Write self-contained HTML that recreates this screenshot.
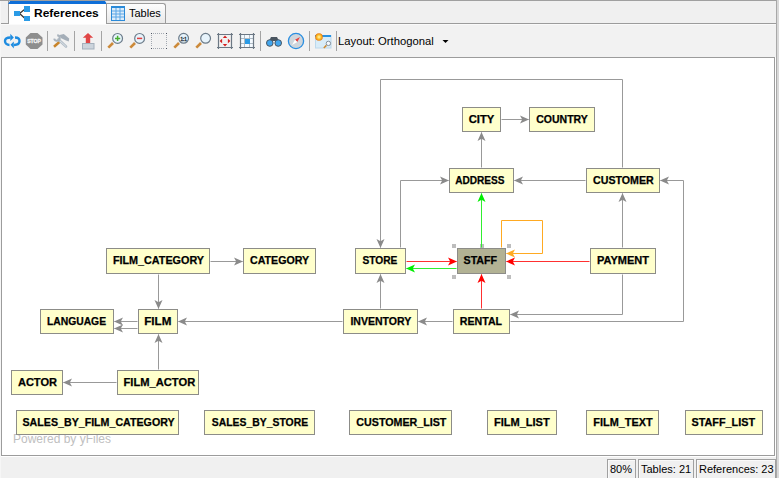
<!DOCTYPE html>
<html><head><meta charset="utf-8">
<style>
*{margin:0;padding:0;box-sizing:border-box}
html,body{width:779px;height:478px;overflow:hidden;background:#f0f0f0;font-family:"Liberation Sans",sans-serif;position:relative}
.abs{position:absolute}
#topline{left:0;top:0;width:777px;height:1px;background:#a0a0a0}
#rightline{left:776px;top:0;width:1px;height:478px;background:#a8a8a8}
#rightstrip{left:777px;top:0;width:2px;height:478px;background:#d9d9d9}
#tabline{left:1px;top:23px;width:775px;height:1px;background:#9c9c9c}
#tabhl{left:1px;top:24px;width:775px;height:1px;background:#fafafa}
#toolbar{left:1px;top:25px;width:775px;height:32px;background:#f2f2f2}
#tab1{left:8px;top:1px;width:98px;height:23px;background:#fff;border-left:1px solid #9c9c9c}
#tab1 .blue{position:absolute;left:-1px;top:0;width:99px;height:3px;background:#0f6fd8;clip-path:polygon(2px 0,calc(100% - 2px) 0,100% 100%,0 100%)}
#tab1 .t{position:absolute;left:25px;top:5px;font-size:11.5px;font-weight:bold;color:#000;line-height:14px;white-space:nowrap;transform:scaleX(1.045);transform-origin:0 0}
#tab2{left:106px;top:3px;width:60px;height:20px;border:1px solid #9c9c9c;border-bottom:none;border-top-right-radius:3px;background:linear-gradient(#fdfdfd,#e9e9e9)}
#tab2 .t{position:absolute;left:22px;top:2px;font-size:11px;color:#000;line-height:14px;white-space:nowrap}
.sep{position:absolute;top:31px;width:1px;height:20px;background:#a4a4a4}
#layout{left:338px;top:34px;font-size:11.25px;color:#000;line-height:14px;white-space:nowrap}
#canvas{left:1px;top:57px;width:774px;height:399px;background:#fff;border:1px solid #9c9c9c}
#canvhl{left:1px;top:57px;width:775px;height:400px;background:#fff}
.n{position:absolute;border:1px solid #8c8c88;display:flex;align-items:flex-start;justify-content:center;padding-top:5px;font-weight:bold;font-size:11px;color:#000;white-space:nowrap}
.n span{display:inline-block;position:relative;top:0px;line-height:13px;-webkit-text-stroke:0.25px #000}
#powered{left:13px;top:432px;font-size:12px;color:#c0c0c0;line-height:14px;white-space:nowrap}
.sb{position:absolute;top:459px;height:19px;border:1px solid #a0a0a0;border-bottom:none;background:#f0f0f0;font-size:11px;line-height:14px;white-space:nowrap;padding-left:2px;padding-top:1.5px}
.sb:before{content:"";position:absolute;left:0;top:0;right:0;bottom:0;border-left:1px solid #fafafa;border-top:1px solid #fafafa}
</style></head><body>
<div class="abs" id="topline"></div>
<div class="abs" id="rightstrip"></div>
<div class="abs" style="left:0;top:1px;width:1px;height:477px;background:#f6f6f6"></div>
<div class="abs" id="tabline"></div>
<div class="abs" id="tabhl"></div>
<div class="abs" id="toolbar"></div>
<div class="abs" id="tab1"><div class="blue"></div>
<svg class="abs" style="left:5px;top:5px" width="17" height="17" viewBox="0 0 17 17">
<path d="M5.5 7.5 L10.5 3.5 M5.5 7.5 L10.5 12" stroke="#333" stroke-width="1.3" fill="none"/>
<rect x="0" y="5" width="6" height="5" fill="#2a9be6"/>
<rect x="10" y="0" width="6" height="6" fill="#2a9be6"/>
<rect x="10" y="10" width="6" height="5" fill="#2a9be6"/>
</svg>
<div class="t">References</div></div>
<div class="abs" id="tab2">
<svg class="abs" style="left:4px;top:2px" width="14" height="15" viewBox="0 0 14 15">
<rect x="0" y="0" width="14" height="15" fill="#2b8ad8"/>
<rect x="1" y="2" width="12" height="12" fill="#dcecfa"/>
<path d="M5 2V14 M9 2V14 M1 5H13 M1 8H13 M1 11H13" stroke="#5aa6e6" stroke-width="1"/>
</svg>
<div class="t">Tables</div></div>

<!-- toolbar icons -->
<svg class="abs" style="left:0;top:25px" width="460" height="32" viewBox="0 25 460 32">
<!-- refresh -->
<g fill="none" stroke="#1e8ce0" stroke-width="2.4">
<path d="M10.5 37.5 C6.5 37.5 5 39 5 41 C5 43.5 7 45 9.5 45"/>
<path d="M14 45 C18 45 19.5 43 19.5 41 C19.5 38.5 17.5 37.5 15 37.5"/>
</g>
<path d="M10.3 33.8 L13.8 37.5 L10.3 41 Z" fill="#1e8ce0"/>
<path d="M13.8 41.5 L10.5 44.8 L13.8 48.5 Z" fill="#1e8ce0"/>
<!-- stop -->
<polygon points="30.5,33 37.5,33 42.5,37.5 42.5,44.5 37.5,49 30.5,49 25.8,44.5 25.8,37.5" fill="#8e8e8e"/>
<text x="27.2" y="43.4" font-family="Liberation Sans" font-weight="bold" font-size="6" fill="#f4f4f4" stroke="#f4f4f4" stroke-width="0.35" textLength="13.8" lengthAdjust="spacingAndGlyphs">STOP</text>
<!-- tools -->
<path d="M54 46.8 L59.4 42" stroke="#c8842a" stroke-width="2.5"/>
<path d="M58.5 39.5 L66 46.5" stroke="#b4bec8" stroke-width="2.6" stroke-linecap="round"/>
<path d="M58.8 39.8 L65.8 46.3" stroke="#dfe5ea" stroke-width="0.9" stroke-linecap="round"/>
<path d="M57.2 35.2 A2.8 2.8 0 1 1 54.2 38.6" stroke="#a8b2bc" stroke-width="2" fill="none"/>
<path d="M59.5 35 L63.8 34 L69.2 38.6 L68.8 41.6 L66 40.6 L60.8 38 Z" fill="#a4aeb8"/>
<!-- export -->
<rect x="82.5" y="43.5" width="11.5" height="5.5" fill="#ccd4dc" stroke="#a4b0bc" stroke-width="1"/>
<polygon points="88,33 93.2,37.8 90.2,37.8 90.2,43 85.8,43 85.8,37.8 82.8,37.8" fill="#e04646"/>
<!-- zoom in -->
<path d="M108.3 47.7 L113 43" stroke="#cc8a3a" stroke-width="2.6"/>
<circle cx="117.6" cy="38.4" r="4.9" fill="#e8f4fc" stroke="#6c7c8a" stroke-width="1.2"/>
<path d="M117.6 35.8 V41 M115 38.4 H120.2" stroke="#48b030" stroke-width="1.5"/>
<!-- zoom out -->
<path d="M130.3 47.7 L135 43" stroke="#cc8a3a" stroke-width="2.6"/>
<circle cx="139.6" cy="38.4" r="4.9" fill="#e8f4fc" stroke="#6c7c8a" stroke-width="1.2"/>
<path d="M137 38.4 H142.2" stroke="#e04040" stroke-width="1.5"/>
<!-- dotted rect -->
<g fill="#4a5260">
<rect x="151" y="33" width="1" height="1"/><rect x="166" y="33" width="1" height="1"/><rect x="151" y="48" width="1" height="1"/><rect x="166" y="48" width="1" height="1"/>
</g>
<g fill="#a4aab2">
<path d="M153 33h1v1h-1z M155 33h1v1h-1z M157 33h1v1h-1z M159 33h1v1h-1z M161 33h1v1h-1z M163 33h1v1h-1z M153 48h1v1h-1z M155 48h1v1h-1z M157 48h1v1h-1z M159 48h1v1h-1z M161 48h1v1h-1z M163 48h1v1h-1z M151 35h1v1h-1z M151 37h1v1h-1z M151 39h1v1h-1z M151 41h1v1h-1z M151 43h1v1h-1z M151 45h1v1h-1z M166 35h1v1h-1z M166 37h1v1h-1z M166 39h1v1h-1z M166 41h1v1h-1z M166 43h1v1h-1z M166 45h1v1h-1z"/>
</g>
<!-- zoom 1:1 -->
<path d="M174.3 47.7 L179 43" stroke="#cc8a3a" stroke-width="2.6"/>
<circle cx="183.6" cy="38.3" r="4.9" fill="#e8f4fc" stroke="#6c7c8a" stroke-width="1.2"/>
<text x="180.4" y="40.8" font-family="Liberation Sans" font-size="6.2" font-weight="bold" fill="#2a3440" stroke="#2a3440" stroke-width="0.3" textLength="6.4" lengthAdjust="spacingAndGlyphs">1:1</text>
<!-- zoom fit -->
<path d="M196.3 47.7 L201 43" stroke="#cc8a3a" stroke-width="2.6"/>
<circle cx="205.6" cy="38.3" r="4.9" fill="#e8f4fc" stroke="#6c7c8a" stroke-width="1.2"/>
<!-- fit content -->
<g stroke="#6c7884" stroke-width="1.2" fill="none">
<path d="M217 34.5 H233 M217 47.5 H233 M218.5 33 V49 M231.5 33 V49"/>
</g>
<g fill="#d42020">
<polygon points="225,35.6 227.2,38.1 222.8,38.1"/>
<polygon points="225,46.4 227.2,43.9 222.8,43.9"/>
<polygon points="219.6,41 222.1,38.8 222.1,43.2"/>
<polygon points="230.4,41 227.9,38.8 227.9,43.2"/>
</g>
<!-- grid -->
<rect x="240" y="34" width="14" height="14" fill="#f4faff"/>
<g stroke="#a8b4c0" stroke-width="0.9"><path d="M244.5 34 V48 M249.5 34 V48 M240 38.5 H254 M240 43.5 H254"/></g>
<rect x="245" y="39" width="5" height="5" fill="#2a9be6"/>
<g stroke="#6c7884" stroke-width="1.2" fill="none">
<path d="M239 34.5 H255 M239 47.5 H255 M240.5 33 V49 M253.5 33 V49"/>
</g>
<!-- binoculars -->
<path d="M271 37 H277 L279 41 H269 Z" fill="#4a5560"/>
<circle cx="269.8" cy="43" r="3.3" fill="#42a6ee" stroke="#4a5560" stroke-width="1"/>
<circle cx="278.2" cy="43" r="3.3" fill="#42a6ee" stroke="#4a5560" stroke-width="1"/>
<!-- compass -->
<circle cx="296" cy="41" r="7.6" fill="#cfd6dc" stroke="#2a8ee0" stroke-width="1.3"/>
<polygon points="300,37 297.3,42 295,39.8" fill="#e84040"/>
<polygon points="292,45 295,39.8 297.3,42" fill="#ffffff"/>
<!-- layout icon -->
<defs><radialGradient id="sun" cx="0.5" cy="0.5" r="0.5"><stop offset="0" stop-color="#fff6b0"/><stop offset="0.55" stop-color="#ffc028"/><stop offset="1" stop-color="#e87810"/></radialGradient></defs>
<rect x="315.5" y="35.5" width="15.5" height="12.5" fill="#d8ecf8" stroke="#bcd8ec" stroke-width="1"/>
<rect x="315" y="35" width="16" height="2" fill="#2a92e2"/>
<circle cx="319" cy="37" r="3.8" fill="url(#sun)"/>
<circle cx="328.4" cy="43.4" r="2.2" fill="#f4f8fc" stroke="#7a8894" stroke-width="0.9"/>
<path d="M326.4 45.4 L323.8 48" stroke="#d08a30" stroke-width="1.5"/>
<!-- dropdown arrow -->
<polygon points="442.5,40 448.5,40 445.5,43" fill="#000"/>
</svg>
<div class="sep" style="left:47px"></div>
<div class="sep" style="left:74px"></div>
<div class="sep" style="left:101px"></div>
<div class="sep" style="left:260px"></div>
<div class="sep" style="left:309px"></div>
<div class="sep" style="left:336px"></div>
<div class="abs" id="layout">Layout: Orthogonal</div>

<div class="abs" id="canvhl"></div>
<div class="abs" id="canvas"></div>
<div class="abs" id="powered">Powered by yFiles</div>
<div class="n" style="left:462px;top:107px;width:39px;height:25px;background:#ffffcc"><span style="left:0.0px;transform:scaleX(1.0208)">CITY</span></div>
<div class="n" style="left:529px;top:107px;width:66px;height:25px;background:#ffffcc"><span style="left:0.0px;transform:scaleX(0.9528)">COUNTRY</span></div>
<div class="n" style="left:449px;top:168px;width:65px;height:25px;background:#ffffcc"><span style="left:-2.0px;transform:scaleX(0.9170)">ADDRESS</span></div>
<div class="n" style="left:586px;top:168px;width:74px;height:25px;background:#ffffcc"><span style="left:0.0px;transform:scaleX(0.9677)">CUSTOMER</span></div>
<div class="n" style="left:355px;top:248px;width:51px;height:26px;background:#ffffcc"><span style="left:-1.0px;transform:scaleX(0.9270)">STORE</span></div>
<div class="n" style="left:457px;top:248px;width:49px;height:26px;background:#b2b294"><span style="left:-1.0px;transform:scaleX(0.9706)">STAFF</span></div>
<div class="n" style="left:590px;top:248px;width:66px;height:26px;background:#ffffcc"><span style="left:0.0px;transform:scaleX(1.0000)">PAYMENT</span></div>
<div class="n" style="left:106px;top:248px;width:104px;height:26px;background:#ffffcc"><span style="left:0.0px;transform:scaleX(0.9804)">FILM_CATEGORY</span></div>
<div class="n" style="left:243px;top:248px;width:73px;height:26px;background:#ffffcc"><span style="left:0.0px;transform:scaleX(0.9667)">CATEGORY</span></div>
<div class="n" style="left:40px;top:309px;width:74px;height:25px;background:#ffffcc"><span style="left:-1.0px;transform:scaleX(0.9403)">LANGUAGE</span></div>
<div class="n" style="left:138px;top:309px;width:40px;height:25px;background:#ffffcc"><span style="left:0.0px;transform:scaleX(1.0583)">FILM</span></div>
<div class="n" style="left:343px;top:309px;width:75px;height:25px;background:#ffffcc"><span style="left:0.0px;transform:scaleX(0.9548)">INVENTORY</span></div>
<div class="n" style="left:453px;top:309px;width:57px;height:25px;background:#ffffcc"><span style="left:-0.5px;transform:scaleX(0.9651)">RENTAL</span></div>
<div class="n" style="left:11px;top:370px;width:52px;height:25px;background:#ffffcc"><span style="left:0.0px;transform:scaleX(1.0053)">ACTOR</span></div>
<div class="n" style="left:117px;top:370px;width:82px;height:25px;background:#ffffcc"><span style="left:1.0px;transform:scaleX(1.0145)">FILM_ACTOR</span></div>
<div class="n" style="left:16px;top:410px;width:163px;height:25px;background:#ffffcc"><span style="left:1.5px;transform:scaleX(0.9679)">SALES_BY_FILM_CATEGORY</span></div>
<div class="n" style="left:204px;top:410px;width:111px;height:25px;background:#ffffcc"><span style="left:0.0px;transform:scaleX(0.9455)">SALES_BY_STORE</span></div>
<div class="n" style="left:349px;top:410px;width:103px;height:25px;background:#ffffcc"><span style="left:0.5px;transform:scaleX(0.9707)">CUSTOMER_LIST</span></div>
<div class="n" style="left:487px;top:410px;width:70px;height:25px;background:#ffffcc"><span style="left:0.0px;transform:scaleX(1.0036)">FILM_LIST</span></div>
<div class="n" style="left:586px;top:410px;width:73px;height:25px;background:#ffffcc"><span style="left:0.0px;transform:scaleX(0.9898)">FILM_TEXT</span></div>
<div class="n" style="left:685px;top:410px;width:78px;height:25px;background:#ffffcc"><span style="left:-1.0px;transform:scaleX(0.9844)">STAFF_LIST</span></div>
<svg class="abs" style="left:0;top:0" width="779" height="478">
<rect x="452" y="244" width="4" height="4" fill="#bdbdbd"/>
<rect x="480" y="244" width="4" height="4" fill="#bdbdbd"/>
<rect x="507" y="244" width="4" height="4" fill="#bdbdbd"/>
<rect x="452" y="275" width="4" height="4" fill="#bdbdbd"/>
<rect x="507" y="275" width="4" height="4" fill="#bdbdbd"/>
<path d="M501.5 119.5 L528.5 119.5" stroke="#999999" fill="none"/>
<polygon points="529.00,119.50 520.00,123.50 522.20,119.50 520.00,115.50" fill="#8a8a8a"/>
<path d="M481.5 167.5 L481.5 132.5" stroke="#999999" fill="none"/>
<polygon points="481.50,132.00 485.50,141.00 481.50,138.80 477.50,141.00" fill="#8a8a8a"/>
<path d="M585.5 180.5 L514.5 180.5" stroke="#999999" fill="none"/>
<polygon points="514.00,180.50 523.00,176.50 520.80,180.50 523.00,184.50" fill="#8a8a8a"/>
<path d="M400.5 247.5 L400.5 180.5 L448.5 180.5" stroke="#999999" fill="none"/>
<polygon points="449.00,180.50 440.00,184.50 442.20,180.50 440.00,176.50" fill="#8a8a8a"/>
<path d="M622.5 167.5 L622.5 79.5 L380.5 79.5 L380.5 247.5" stroke="#999999" fill="none"/>
<polygon points="380.50,248.00 376.50,239.00 380.50,241.20 384.50,239.00" fill="#8a8a8a"/>
<path d="M481.5 247.5 L481.5 193.5" stroke="#30ee30" fill="none"/>
<polygon points="481.50,193.00 485.50,202.00 481.50,199.80 477.50,202.00" fill="#00ee00"/>
<path d="M501.5 247.5 L501.5 220.5 L542.5 220.5 L542.5 253.5 L506.5 253.5" stroke="#ffaa22" fill="none"/>
<polygon points="506.00,253.50 515.00,249.50 512.80,253.50 515.00,257.50" fill="#ffaa22"/>
<path d="M406.5 261.5 L456.5 261.5" stroke="#ff3030" fill="none"/>
<polygon points="457.00,261.50 448.00,265.50 450.20,261.50 448.00,257.50" fill="#ff0000"/>
<path d="M456.5 268.5 L406.5 268.5" stroke="#30ee30" fill="none"/>
<polygon points="406.00,268.50 415.00,264.50 412.80,268.50 415.00,272.50" fill="#00ee00"/>
<path d="M589.5 261.5 L506.5 261.5" stroke="#ff3030" fill="none"/>
<polygon points="506.00,261.50 515.00,257.50 512.80,261.50 515.00,265.50" fill="#ff0000"/>
<path d="M622.5 247.5 L622.5 193.5" stroke="#999999" fill="none"/>
<polygon points="622.50,193.00 626.50,202.00 622.50,199.80 618.50,202.00" fill="#8a8a8a"/>
<path d="M622.5 274.5 L622.5 314.5 L510.5 314.5" stroke="#999999" fill="none"/>
<polygon points="510.00,314.50 519.00,310.50 516.80,314.50 519.00,318.50" fill="#8a8a8a"/>
<path d="M481.5 308.5 L481.5 274.5" stroke="#ff3030" fill="none"/>
<polygon points="481.50,274.00 485.50,283.00 481.50,280.80 477.50,283.00" fill="#ff0000"/>
<path d="M510.5 321.5 L683.5 321.5 L683.5 180.5 L660.5 180.5" stroke="#999999" fill="none"/>
<polygon points="660.00,180.50 669.00,176.50 666.80,180.50 669.00,184.50" fill="#8a8a8a"/>
<path d="M452.5 321.5 L418.5 321.5" stroke="#999999" fill="none"/>
<polygon points="418.00,321.50 427.00,317.50 424.80,321.50 427.00,325.50" fill="#8a8a8a"/>
<path d="M380.5 308.5 L380.5 274.5" stroke="#999999" fill="none"/>
<polygon points="380.50,274.00 384.50,283.00 380.50,280.80 376.50,283.00" fill="#8a8a8a"/>
<path d="M342.5 321.5 L178.5 321.5" stroke="#999999" fill="none"/>
<polygon points="178.00,321.50 187.00,317.50 184.80,321.50 187.00,325.50" fill="#8a8a8a"/>
<path d="M137.5 321.5 L114.5 321.5" stroke="#999999" fill="none"/>
<polygon points="114.00,321.50 123.00,317.50 120.80,321.50 123.00,325.50" fill="#8a8a8a"/>
<path d="M137.5 328.5 L114.5 328.5" stroke="#999999" fill="none"/>
<polygon points="114.00,328.50 123.00,324.50 120.80,328.50 123.00,332.50" fill="#8a8a8a"/>
<path d="M158.5 274.5 L158.5 308.5" stroke="#999999" fill="none"/>
<polygon points="158.50,309.00 154.50,300.00 158.50,302.20 162.50,300.00" fill="#8a8a8a"/>
<path d="M210.5 261.5 L242.5 261.5" stroke="#999999" fill="none"/>
<polygon points="243.00,261.50 234.00,265.50 236.20,261.50 234.00,257.50" fill="#8a8a8a"/>
<path d="M158.5 369.5 L158.5 334.5" stroke="#999999" fill="none"/>
<polygon points="158.50,334.00 162.50,343.00 158.50,340.80 154.50,343.00" fill="#8a8a8a"/>
<path d="M116.5 382.5 L63.5 382.5" stroke="#999999" fill="none"/>
<polygon points="63.00,382.50 72.00,378.50 69.80,382.50 72.00,386.50" fill="#8a8a8a"/>
</svg>
<div class="abs" id="rightline"></div>
<div class="sb" style="left:607px;width:29px">80%</div>
<div class="sb" style="left:638px;width:56px">Tables: 21</div>
<div class="sb" style="left:696px;width:80px">References: 23</div>
</body></html>
